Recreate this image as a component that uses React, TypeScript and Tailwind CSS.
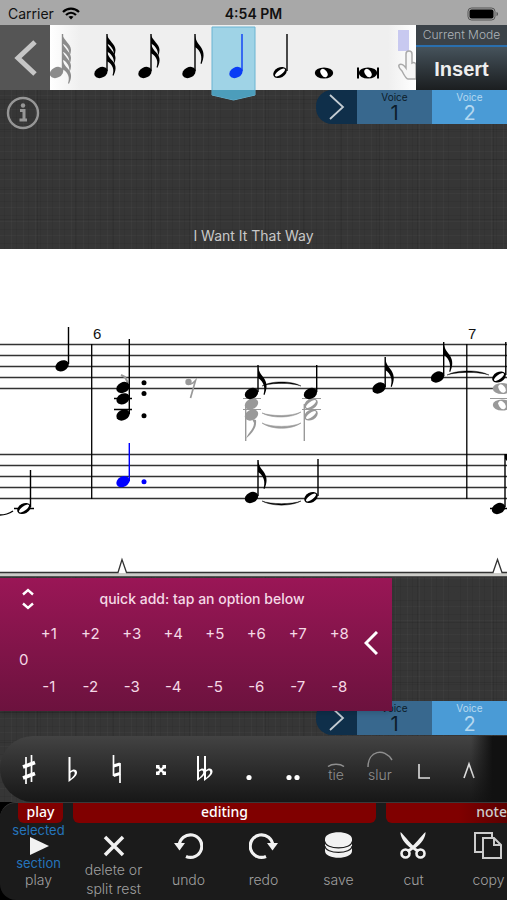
import { useState } from 'react';
import type { ReactNode } from 'react';

const FLAG = 'M0 0 C1 7 4 9 6.5 13 C9.5 18 9 23 6.5 29 L5.5 28.5 C7.5 22 6 16 0 12 Z';
const SMALL_FLAG = 'M0 0 C1 5 8.5 9 8.5 15 C8.5 17 8 19 7 21 C7.5 14 3 10 0 8.5 Z';

interface HeadProps {
  x: number;
  y: number;
  color?: string;
}

const Head = ({ x, y, color = '#000' }: HeadProps) => (
  <ellipse rx="7" ry="5.2" transform={`translate(${x} ${y}) rotate(-28)`} fill={color} />
);

const HalfHead = ({ x, y, color = '#000' }: HeadProps) => (
  <g transform={`translate(${x} ${y}) rotate(-28)`}>
    <ellipse rx="7.2" ry="5" fill={color} />
    <ellipse rx="6" ry="2.2" transform="rotate(-8)" fill="#fff" />
  </g>
);

const WholeHead = ({ x, y, color = '#000' }: HeadProps) => (
  <g transform={`translate(${x} ${y})`}>
    <ellipse rx="9.200" ry="5.600" fill={color} />
    <ellipse rx="4.600" ry="3" transform="rotate(55)" fill="#fff" />
  </g>
);

interface NoteProps {
  flags: number;
  x?: number;
  color?: string;
}

const PaletteNote = ({ flags, x = 21, color = '#000' }: NoteProps) => (
  <>
    <Head x={x} y={47.5} color={color} />
    <path d={`M${x + 6} 9V46`} stroke={color} strokeWidth="1.4" />
    {flags === 1 && <path d={FLAG} transform={`translate(${x + 6} 10)`} fill={color} />}
    {flags > 1 &&
      Array.from({ length: flags }, (_, i) => (
        <path
          key={i}
          d={i === flags - 1 ? FLAG : SMALL_FLAG}
          transform={`translate(${x + 6} ${10 + i * 8}) ${i === flags - 1 ? 'scale(1 0.85)' : ''}`}
          fill={color}
        />
      ))}
  </>
);

const durations: { name: string; glyph: ReactNode }[] = [
  { name: 'thirty-second note', glyph: <PaletteNote flags={3} /> },
  { name: 'sixteenth note', glyph: <PaletteNote flags={2} /> },
  { name: 'eighth note', glyph: <PaletteNote flags={1} /> },
  { name: 'quarter note', glyph: <PaletteNote flags={0} x={24} color="#0a3cf5" /> },
  {
    name: 'half note',
    glyph: (
      <>
        <HalfHead x={24} y={47.5} />
        <path d="M31 9V46" stroke="#000" strokeWidth="1.4" />
      </>
    ),
  },
  { name: 'whole note', glyph: <WholeHead x={24} y={48} /> },
  {
    name: 'double whole note',
    glyph: (
      <>
        <WholeHead x={24} y={48} />
        <path d="M14 42.500V53.500M34 42.500V53.500" stroke="#000" strokeWidth="2" />
      </>
    ),
  },
];

const FlatShape = () => (
  <path
    d="M0 0H2V14C5 11 9 12.500 8.500 16C8 19.500 4 22 0 25ZM2 16V22C5 19.500 6.500 17.500 6.200 15.800C5.800 13.800 3.500 14.300 2 16Z"
    fillRule="evenodd"
  />
);

const accidentals: { name: string; glyph: ReactNode }[] = [
  {
    name: 'sharp',
    glyph: (
      <g stroke="#fff">
        <path d="M20 21V48M25.500 19V46" strokeWidth="1.700" />
        <path d="M17 31L29 26.500M17 42L29 37.500" strokeWidth="3.600" />
      </g>
    ),
  },
  { name: 'flat', glyph: <g transform="translate(18.500 21)"><FlatShape /></g> },
  {
    name: 'natural',
    glyph: (
      <g stroke="#fff">
        <path d="M19.500 19V40M26 27V47" strokeWidth="1.700" />
        <path d="M19.500 30L26 28M19.500 39.500L26 37.500" strokeWidth="3.200" />
      </g>
    ),
  },
  {
    name: 'double sharp',
    glyph: (
      <>
        <path d="M19 30L27 38M27 30L19 38" stroke="#fff" strokeWidth="2.400" />
        <path d="M18 29H21.500V32.500H18ZM24.500 29H28V32.500H24.500ZM18 35.500H21.500V39H18ZM24.500 35.500H28V39H24.500Z" />
      </>
    ),
  },
  {
    name: 'double flat',
    glyph: (
      <>
        <g transform="translate(15 20)"><FlatShape /></g>
        <g transform="translate(22 20)"><FlatShape /></g>
      </>
    ),
  },
  { name: 'dot', glyph: <circle cx="23" cy="41.500" r="2.600" /> },
  {
    name: 'double dot',
    glyph: (
      <>
        <circle cx="19" cy="41.500" r="2.600" />
        <circle cx="27" cy="41.500" r="2.600" />
      </>
    ),
  },
];

const InfoIcon = () => (
  <svg viewBox="0 0 34 34" className="h-[34px] w-[34px]" fill="none" stroke="#969696">
    <circle cx="17" cy="17" r="15" strokeWidth="2.400" />
    <path d="M14 14.500H18V24M13.500 24H21" strokeWidth="3" />
    <circle cx="17" cy="9.500" r="2.200" fill="#969696" stroke="none" />
  </svg>
);

const VoiceTabs = () => {
  const [voice, setVoice] = useState(2);

  return (
    <div className="flex h-[34px] w-[191px] overflow-hidden rounded-l-2xl">
      <button aria-label="Hide voices" className="flex w-[41px] items-center justify-center bg-[#0f2f4a]">
        <svg viewBox="0 0 16 26" className="h-[26px] w-4" fill="none" stroke="#c3ccd3" strokeWidth="1.800">
          <path d="M1 1L14 13L1 25" />
        </svg>
      </button>
      {[1, 2].map((n) => (
        <button
          key={n}
          onClick={() => setVoice(n)}
          className={`flex flex-1 flex-col items-center font-['Inter',sans-serif] ${
            n === voice ? 'bg-[#4a9bd6] text-[#b4d8f0]' : 'bg-[#38688e] text-[#0c1c2a]'
          }`}
        >
          <span className="text-[10px] leading-[14px]">Voice</span>
          <span className="text-xl leading-[18px]">{n}</span>
        </button>
      ))}
    </div>
  );
};

const StatusBar = () => (
  <div className="grid h-[25px] grid-cols-3 items-center bg-[#a8a8a8] px-2 pt-[2px] font-['Inter',sans-serif] text-sm text-[#111]">
    <div className="flex items-center gap-2">
      <span>Carrier</span>
      <svg viewBox="0 0 18 13" className="h-[13px] w-[18px]" fill="none" stroke="#000" strokeWidth="2.200">
        <path d="M1 5C5.500 0.500 12.500 0.500 17 5" />
        <path d="M4 8C7 5 11 5 14 8" />
        <path d="M9 12.500L6.500 9.800C8 8.600 10 8.600 11.500 9.800Z" fill="#000" stroke="none" />
      </svg>
    </div>
    <span className="text-center font-semibold">4:54 PM</span>
    <svg viewBox="0 0 32 14" className="h-3.5 w-8 justify-self-end">
      <rect x="1" y="1" width="27" height="12" rx="3.500" fill="none" stroke="#555" />
      <rect x="2.500" y="2.500" width="24" height="9" rx="2" fill="#000" />
      <path d="M29.500 5C31.500 5.500 31.500 8.500 29.500 9Z" fill="#555" />
    </svg>
  </div>
);

const NotePalette = () => {
  const [selected, setSelected] = useState(3);

  return (
    <div className="flex min-w-0 flex-1 bg-[#efefef]">
      <button aria-label="sixty-fourth note" className="w-[30px] shrink-0 bg-linear-to-r from-white to-[#efefef]">
        <svg viewBox="14 0 30 65" className="block h-[65px] w-[30px]">
          <PaletteNote flags={4} x={20.5} color="#8c8c8c" />
        </svg>
      </button>
      {durations.map((d, i) => (
        <button
          key={d.name}
          aria-label={d.name}
          aria-pressed={i === selected}
          onClick={() => setSelected(i)}
          className="relative w-11 shrink-0"
        >
          <svg viewBox="0 0 44 65" className="block h-[65px] w-11 overflow-visible">
            {i === selected && (
              <path d="M0 2H43V70L21.500 75L0 70Z" fill="#9fd3e6" stroke="#6ab4d2" />
            )}
            {i === selected && <path d="M0 65H43V70L21.500 75L0 70Z" fill="#4c9dbb" />}
            {d.glyph}
          </svg>
        </button>
      ))}
      <button aria-label="Scroll palette" className="min-w-0 flex-1 overflow-hidden bg-linear-to-r from-[#efefef] to-white">
        <svg viewBox="0 0 28 65" className="block h-[65px] w-7">
          <rect x="10" y="5" width="11" height="21" fill="#c8c9f0" />
          <path
            d="M18 43V29C18 25 24 25 24 29V38C26 37 28 38 28 40V54H20C18 54 16 50 14 46C12 44 10 42 11 40C13 38 16 40 18 43Z"
            fill="#f6f6f6"
            stroke="#aaa"
            strokeWidth="1.500"
          />
        </svg>
      </button>
    </div>
  );
};

const Score = () => (
  <svg viewBox="0 249 507 328" className="block w-full bg-white" role="img" aria-label="Score, measures 6 and 7">
    <g stroke="#333" strokeWidth="1.300">
      <path d="M0 344.500H507M0 355.500H507M0 366.500H507M0 377.500H507M0 388.500H507" />
      <path d="M0 454.500H507M0 465.500H507M0 476.500H507M0 487.500H507M0 498.500H507" />
      <path d="M91.700 344V499M466.800 344V499" stroke="#000" />
    </g>
    <g fontFamily="Liberation Sans, Arial, sans-serif" fontSize="15" fill="#111">
      <text x="93" y="339">6</text>
      <text x="468" y="339">7</text>
    </g>

    {/* second voice */}
    <g stroke="#999" fill="none" strokeWidth="1.200">
      <path d="M243 398.500H261M243 409.500H261M302 398.500H321M302 409.500H321M490 398.500H507" />
      <path d="M245.700 404V441M304.300 404V441" strokeWidth="1.400" />
      <path d="M121 375L125 377L128 383" strokeWidth="2" />
      <path d="M189 384C192 385 194 382 195.500 380.500L190.500 398" strokeWidth="1.700" />
    </g>
    <circle cx="188.500" cy="382" r="3.200" fill="#999" />
    <path d="M245.700 441C246 434 254 430 254 423L252 419L256 420C257 429 251 434 245.700 439Z" fill="#999" />
    <path d="M262 413C271 418.500 292 418.500 301 412C292 416.500 271 416.500 262 413Z" fill="#999" stroke="#999" strokeWidth="0.600" />
    <path d="M262 423C271 430 292 430 301 423C292 427.500 271 427.500 262 423Z" fill="#999" stroke="#999" strokeWidth="0.600" />
    <Head x={251.5} y={404} color="#999" />
    <Head x={251.5} y={415} color="#999" />
    <HalfHead x={311} y={404} color="#999" />
    <HalfHead x={311} y={415} color="#999" />
    <WholeHead x={502} y={388.5} color="#999" />
    <WholeHead x={502} y={405} color="#999" />

    {/* first voice, upper staff */}
    <g stroke="#000" strokeWidth="1.400">
      <path d="M68.500 327V364M129.300 339V414M258 365V392M316.700 365V392M385.200 357V387M443.700 342V376M505.800 342V375" />
      <path d="M114 398.500H132M114 409.500H132" />
    </g>
    <Head x={62} y={365.8} />
    <Head x={123} y={387.5} />
    <Head x={123} y={398.8} />
    <Head x={123} y={415} />
    <circle cx="144" cy="382.700" r="2.500" />
    <circle cx="144" cy="393.600" r="2.500" />
    <circle cx="144" cy="415.700" r="2.500" />
    <Head x={251.5} y={393.5} />
    <Head x={310.5} y={393.5} />
    <Head x={379} y={388} />
    <Head x={437.5} y={377} />
    <HalfHead x={499} y={377} />
    <path d={FLAG} transform="translate(258 366)" />
    <path d={FLAG} transform="translate(385.200 358)" />
    <path d={FLAG} transform="translate(443.700 343)" />
    <g stroke="#000" strokeWidth="0.400">
      <path d="M262 386C271 380.500 292 380.500 301 386C292 382.500 271 382.500 262 386Z" />
      <path d="M447 375C457 369.500 479 369.500 489 375C479 371.500 457 371.500 447 375Z" />
    </g>

    {/* lower staff */}
    <g stroke="#000" strokeWidth="1.400">
      <path d="M30.500 470V507M258 460V496M318 459V496M505 454V507" />
      <path d="M14 508.500H34M490 508.500H507" />
    </g>
    <path d="M0 515C6 515 10 513 13 511" fill="none" stroke="#000" strokeWidth="1.500" />
    <HalfHead x={24} y={508.5} />
    <Head x={251.5} y={497.5} />
    <HalfHead x={311} y={497.5} />
    <Head x={498.5} y={508.5} />
    <path d="M505 454H507V461L505 459Z" />
    <path d={FLAG} transform="translate(258 460)" />
    <path d="M262 501C271 506.500 292 506.500 301 501C292 504.500 271 504.500 262 501Z" stroke="#000" strokeWidth="0.400" />
    <Head x={123} y={481.7} color="#00f" />
    <path d="M129.300 443V481" stroke="#00f" strokeWidth="1.400" />
    <circle cx="144" cy="481.700" r="2.500" fill="#00f" />

    {/* pedal line */}
    <rect x="0" y="573" width="507" height="3" fill="#ccccc8" />
    <rect x="0" y="576" width="507" height="1" fill="#555" />
    <path d="M0 572.500H118L122 559.500L126.500 572.500H493L497.500 559.500L502 572.500H507" fill="none" stroke="#333" strokeWidth="1.300" />
  </svg>
);

const QuickAdd = () => (
  <section className="relative z-10 flex h-[133px] w-[392px] max-w-full bg-linear-to-b from-[#9a1656] to-[#6c123e] font-['Inter',sans-serif] text-[#f5d9e6] shadow-md">
    <div className="flex-1">
      <div className="flex h-[42px] items-center pl-4">
        <button aria-label="Resize panel" className="flex h-6 w-6 items-center justify-center">
          <svg viewBox="0 0 12 22" className="h-[22px] w-3" fill="none" stroke="#fff" strokeWidth="2.400">
            <path d="M1 6.500L6 2L11 6.500M1 15.500L6 20L11 15.500" />
          </svg>
        </button>
        <h2 className="flex-1 pl-1 text-center text-sm font-medium">quick add: tap an option below</h2>
      </div>
      <div className="flex h-20 items-center text-[15px]">
        <button className="w-7 pl-[19px] leading-5">0</button>
        <div className="grid flex-1 grid-cols-8 gap-y-[33px] leading-5">
          {['+', '-'].map((sign) =>
            [1, 2, 3, 4, 5, 6, 7, 8].map((n) => (
              <button key={sign + n}>
                {sign}
                {n}
              </button>
            ))
          )}
        </div>
      </div>
    </div>
    <button aria-label="Close quick add" className="flex w-8 items-center pb-1 pl-1">
      <svg viewBox="0 0 14 24" className="h-6 w-3.5" fill="none" stroke="#fff" strokeWidth="3">
        <path d="M13 1L2 12L13 23" />
      </svg>
    </button>
  </section>
);

const AccidentalBar = () => (
  <div className="relative flex h-[66px] overflow-hidden rounded-l-[33px] bg-linear-to-b from-[#434343] to-[#171717] pl-[6px] font-['Inter',sans-serif] text-sm text-[#8f8f8f]">
    {accidentals.map((a) => (
      <button key={a.name} aria-label={a.name} className="w-11 shrink-0">
        <svg viewBox="0 0 44 66" className="block h-[66px] w-11" fill="#fff">
          {a.glyph}
        </svg>
      </button>
    ))}
    <button className="flex w-11 shrink-0 flex-col items-center pt-[27px] font-light">
      <svg viewBox="0 0 18 4" className="h-1 w-[18px]" fill="none" stroke="#8f8f8f" strokeWidth="1.500">
        <path d="M1 3.500C5 0.500 13 0.500 17 3.500" />
      </svg>
      <span className="leading-4">tie</span>
    </button>
    <button className="flex w-11 shrink-0 flex-col items-center pt-[15px] font-light">
      <svg viewBox="0 0 26 16" className="h-4 w-[26px]" fill="none" stroke="#8f8f8f" strokeWidth="1.500">
        <path d="M1 16C1 0 17 -4 25 9" />
      </svg>
      <span className="leading-4">slur</span>
    </button>
    <button aria-label="pedal start" className="w-11 shrink-0">
      <svg viewBox="0 0 44 66" className="block h-[66px] w-11" fill="none" stroke="#ddd" strokeWidth="1.600">
        <path d="M17 28V42H28" />
      </svg>
    </button>
    <button aria-label="pedal change" className="w-11 shrink-0">
      <svg viewBox="0 0 44 66" className="block h-[66px] w-11" fill="none" stroke="#ddd" strokeWidth="1.600">
        <path d="M18 42L23 28L28 42" />
      </svg>
    </button>
    <div className="pointer-events-none absolute inset-y-0 right-0 w-9 bg-linear-to-r from-transparent to-[#111] to-60%" />
  </div>
);

const tools: { label: string; icon: ReactNode }[] = [
  {
    label: 'delete or split rest',
    icon: <path d="M6 5L24 23M24 5L6 23" strokeWidth="3.500" />,
  },
  {
    label: 'undo',
    icon: (
      <>
        <path d="M5.200 13.500A11.300 11.300 0 1 1 12 24.500" strokeWidth="3.200" />
        <path d="M0 11H11L5.500 18.500Z" fill="#f2f2f2" stroke="none" />
      </>
    ),
  },
  {
    label: 'redo',
    icon: (
      <>
        <path d="M23.800 13.500A11.300 11.300 0 1 0 17 24.500" strokeWidth="3.200" />
        <path d="M29 11H18L23.500 18.500Z" fill="#f2f2f2" stroke="none" />
      </>
    ),
  },
  {
    label: 'save',
    icon: (
      <>
        <path d="M1 7C1 -2 28 -2 28 7V19C28 28 1 28 1 19Z" fill="#f2f2f2" stroke="none" />
        <path d="M1 9.500C1 18 28 18 28 9.500M1 14C1 22.500 28 22.500 28 14" stroke="#1b1b1b" strokeWidth="1.200" />
      </>
    ),
  },
  {
    label: 'cut',
    icon: (
      <>
        <circle cx="6.500" cy="21.500" r="4" strokeWidth="2.600" />
        <circle cx="21.500" cy="21.500" r="4" strokeWidth="2.600" />
        <path d="M1.500 0C5 3 10 10 14 13.500C18 10 23 3 26.500 0C27 5 22 12 16.500 16L21 18L18.500 20.500L14 17.500L9.500 20.500L7 18L11.500 16C6 12 1 5 1.500 0Z" fill="#f2f2f2" stroke="none" />
      </>
    ),
  },
  {
    label: 'copy',
    icon: (
      <g strokeWidth="2" stroke="#ccc">
        <path d="M8 20H1V1H18V5" />
        <path d="M9 6H20L27 13V26H9ZM20 6V13H27" />
      </g>
    ),
  },
];

const Toolbar = () => (
  <nav className="overflow-hidden rounded-l-2xl border-t border-[#3a3a3a] bg-[#1b1b1b] font-['Inter',sans-serif]">
    <div className="flex h-5 gap-[10px] pl-[18px] text-center font-['Noto_Sans',sans-serif] text-sm leading-[18px] font-medium text-white">
      <div className="w-[45px] shrink-0 rounded-b-md bg-[#800000]">play</div>
      <div className="w-[303px] shrink-0 rounded-b-md bg-[#800000]">editing</div>
      <div className="min-w-0 flex-1 rounded-bl-md bg-linear-to-r from-[#800000] from-60% to-[#5c0000] text-right text-[#ccc]">note</div>
    </div>
    <div className="flex h-[77px] overflow-hidden pl-px text-sm text-[#a0a0a0]">
      <button className="flex w-[75px] shrink-0 flex-col items-center font-light">
        <span className="text-[13px] leading-[14px] font-normal text-[#2574bb]">selected</span>
        <svg viewBox="0 0 20 18" className="h-[18px] w-5" fill="#f2f2f2">
          <path d="M1 0L20 9L1 18Z" />
        </svg>
        <span className="text-[13px] leading-[16px] font-normal text-[#2574bb]">section</span>
        <span className="leading-[18px]">play</span>
      </button>
      {tools.map((t) => (
        <button key={t.label} className="flex w-[75px] shrink-0 flex-col items-center pt-[9px]">
          <svg viewBox="0 0 29 28" className="h-7 w-[29px]" fill="none" stroke="#f2f2f2">
            {t.icon}
          </svg>
          <span className="flex h-[38px] w-16 items-center justify-center leading-[19px] font-light">{t.label}</span>
        </button>
      ))}
    </div>
  </nav>
);

const CANVAS =
  'bg-[#363636] bg-[repeating-linear-gradient(90deg,#0000_0_4px,#00000010_4px_5px,#0000_5px_11px,#ffffff06_11px_12px),repeating-linear-gradient(0deg,#0000_0_5px,#00000010_5px_6px,#0000_6px_13px,#ffffff06_13px_14px),repeating-linear-gradient(90deg,#0000_0_37px,#00000018_37px_38px),repeating-linear-gradient(0deg,#0000_0_29px,#00000018_29px_30px)]';

export default function App() {
  return (
    <main className="overflow-hidden bg-black">
      <StatusBar />
      <header className="relative z-10 flex h-[65px]">
        <button aria-label="Back" className="flex w-[50px] items-center justify-center bg-[#555]">
          <svg viewBox="0 0 24 36" className="h-9 w-6" fill="none" stroke="#c6c6c6" strokeWidth="5">
            <path d="M22 2L5 18L22 34" />
          </svg>
        </button>
        <NotePalette />
        <div className="flex w-[91px] shrink-0 flex-col bg-[#3b4248] text-center font-['Liberation_Sans',Arial,sans-serif]">
          <span className="h-[22px] border-b-2 border-[#2a6fae] font-['Inter',sans-serif] text-xs leading-5 font-light text-[#aeb4b9]">Current Mode</span>
          <button className="flex-1 bg-linear-to-b from-[#46535c] to-[#1b1e20] text-xl font-bold text-[#eee]">Insert</button>
        </div>
      </header>

      <div className={`flex h-[159px] flex-col justify-between ${CANVAS}`}>
        <div className="flex items-start justify-between">
          <button aria-label="Info" className="mt-[6px] ml-[6px]">
            <InfoIcon />
          </button>
          <VoiceTabs />
        </div>
        <h1 className="pb-1 text-center font-['Inter',sans-serif] text-sm leading-[18px] text-[#c8c8c8]">I Want It That Way</h1>
      </div>

      <Score />

      <div className={CANVAS}>
        <div className="pt-px">
          <QuickAdd />
        </div>
        <div className="-mt-[10px] flex justify-end pb-px">
          <VoiceTabs />
        </div>
        <AccidentalBar />
      </div>
      <Toolbar />
    </main>
  );
}
